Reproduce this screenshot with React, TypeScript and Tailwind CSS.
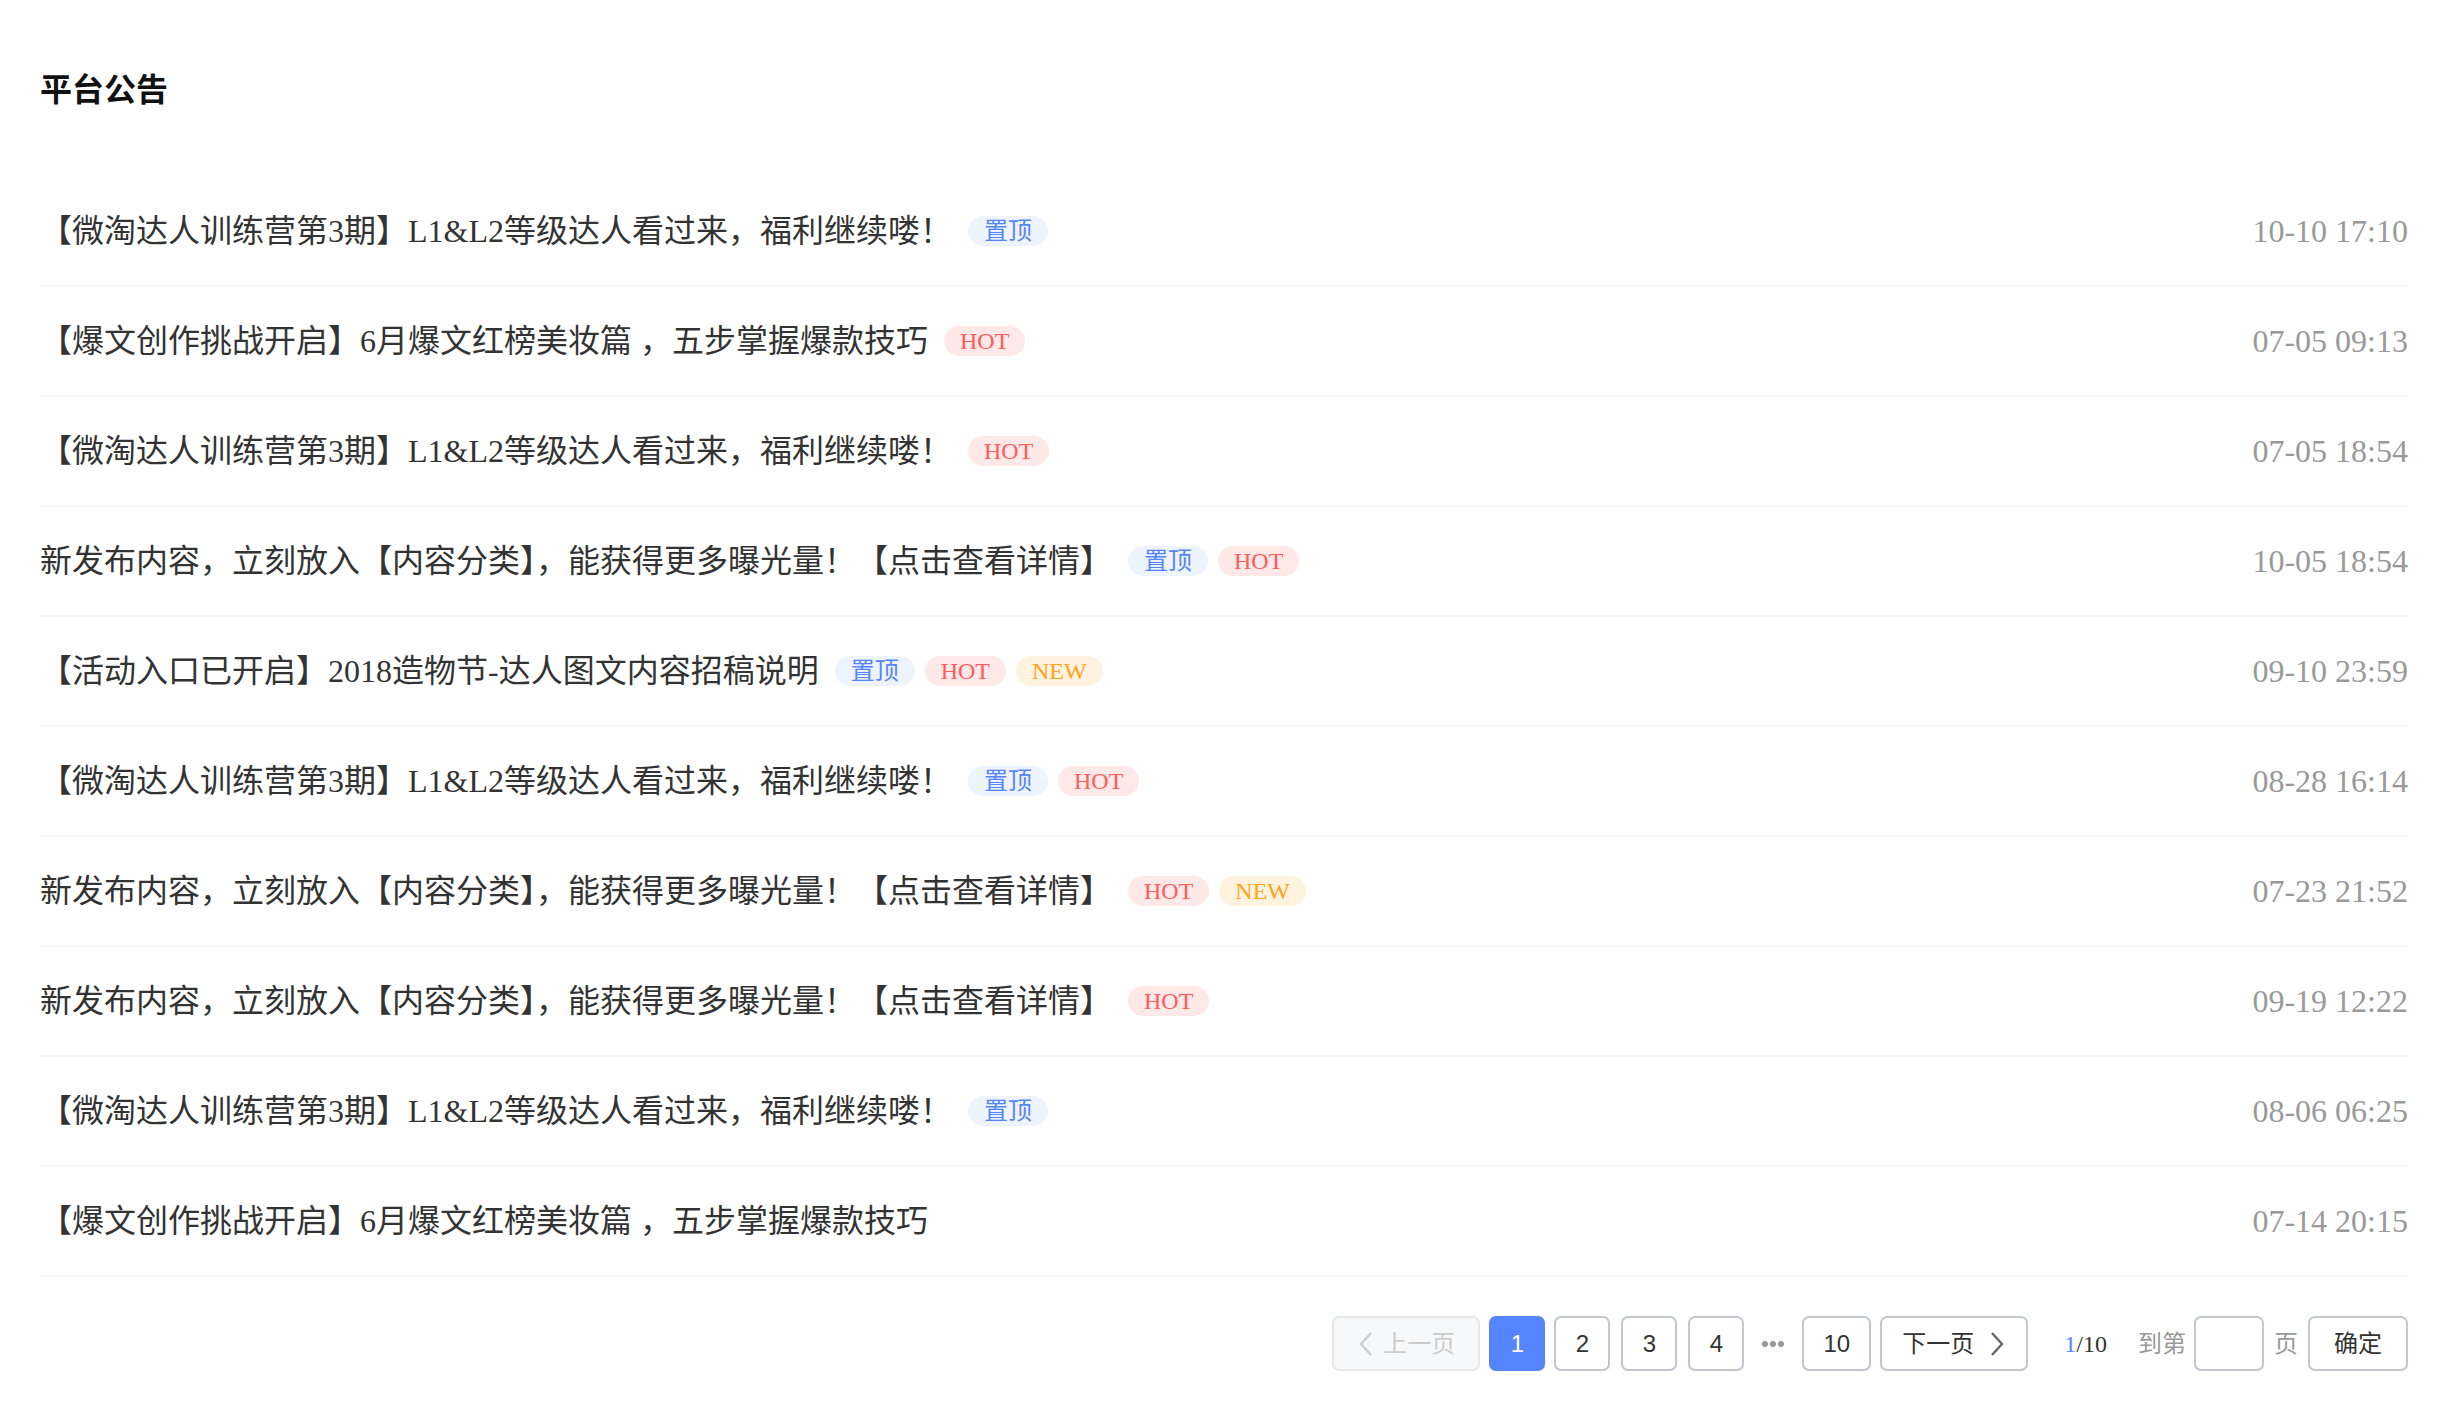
import React from "react";

type Tag = "top" | "hot" | "new";
const rows: { title: string; tags: Tag[]; date: string }[] = [
  { title: "【微淘达人训练营第3期】L1&L2等级达人看过来，福利继续喽！", tags: ["top"], date: "10-10 17:10" },
  { title: "【爆文创作挑战开启】6月爆文红榜美妆篇 ，五步掌握爆款技巧", tags: ["hot"], date: "07-05 09:13" },
  { title: "【微淘达人训练营第3期】L1&L2等级达人看过来，福利继续喽！", tags: ["hot"], date: "07-05 18:54" },
  { title: "新发布内容，立刻放入【内容分类】，能获得更多曝光量！【点击查看详情】", tags: ["top", "hot"], date: "10-05 18:54" },
  { title: "【活动入口已开启】2018造物节-达人图文内容招稿说明", tags: ["top", "hot", "new"], date: "09-10 23:59" },
  { title: "【微淘达人训练营第3期】L1&L2等级达人看过来，福利继续喽！", tags: ["top", "hot"], date: "08-28 16:14" },
  { title: "新发布内容，立刻放入【内容分类】，能获得更多曝光量！【点击查看详情】", tags: ["hot", "new"], date: "07-23 21:52" },
  { title: "新发布内容，立刻放入【内容分类】，能获得更多曝光量！【点击查看详情】", tags: ["hot"], date: "09-19 12:22" },
  { title: "【微淘达人训练营第3期】L1&L2等级达人看过来，福利继续喽！", tags: ["top"], date: "08-06 06:25" },
  { title: "【爆文创作挑战开启】6月爆文红榜美妆篇 ，五步掌握爆款技巧", tags: [], date: "07-14 20:15" },
];

function TagPill({ t }: { t: Tag }) {
  if (t === "top")
    return (
      <span className="ml-[10px] inline-flex h-[30px] items-center rounded-full bg-[#edf4ff] px-[16px] text-[24px] leading-none text-[#5584ff]">
        置顶
      </span>
    );
  if (t === "hot")
    return (
      <span className="ml-[10px] inline-flex h-[30px] items-center rounded-full bg-[#ffe8e8] px-[16px] text-[24px] leading-none text-[#ff5b5b]">
        HOT
      </span>
    );
  return (
    <span className="ml-[10px] inline-flex h-[30px] items-center rounded-full bg-[#fff3e0] px-[16px] text-[24px] leading-none text-[#ffa31a]">
      NEW
    </span>
  );
}

const serif = "[font-family:'Liberation_Serif','Noto_Sans_CJK_SC',serif]";

export default function App() {
  return (
    <div className="min-h-[1412px] w-full bg-white px-[40px] [font-family:'Liberation_Serif','Noto_Sans_CJK_SC',serif]">
      <div className="flex h-[177px] items-center">
        <h1 className="pt-[2px] text-[32px] font-bold leading-none text-[#111]">平台公告</h1>
      </div>
      <div>
        {rows.map((r, i) => (
          <div key={i} className="flex h-[110px] items-center justify-between border-b-2 border-[#f6f6f6]">
            <div className="flex items-center">
              <span className="text-[32px] leading-none text-[#333]">{r.title}</span>
              {r.tags.length > 0 && (
                <span className="ml-[6px] flex items-center">
                  {r.tags.map((t, j) => (
                    <TagPill key={j} t={t} />
                  ))}
                </span>
              )}
            </div>
            <span className="text-[32px] leading-none text-[#999]">{r.date}</span>
          </div>
        ))}
      </div>
      <div className="mt-[39px] flex items-center justify-end [font-family:'Liberation_Sans','Noto_Sans_CJK_SC',sans-serif]">
        <button className="flex h-[55px] w-[148px] items-center justify-center gap-[8px] rounded-[7px] border-2 border-[#e6e7eb] bg-[#f7f8fa] text-[24px] text-[#cccccc]">
          <svg width="18" height="26" viewBox="0 0 18 26" fill="none" stroke="#cccccc" strokeWidth="2.4">
            <path d="M14 2 L4 13 L14 24" />
          </svg>
          <span>上一页</span>
        </button>
        <button className="ml-[9px] flex h-[55px] w-[56px] items-center justify-center rounded-[7px] bg-[#5584ff] text-[24px] text-white">1</button>
        <button className="ml-[9px] flex h-[55px] w-[56px] items-center justify-center rounded-[7px] border-2 border-[#c4c6cf] bg-white text-[24px] text-[#333]">2</button>
        <button className="ml-[11px] flex h-[55px] w-[56px] items-center justify-center rounded-[7px] border-2 border-[#c4c6cf] bg-white text-[24px] text-[#333]">3</button>
        <button className="ml-[11px] flex h-[55px] w-[56px] items-center justify-center rounded-[7px] border-2 border-[#c4c6cf] bg-white text-[24px] text-[#333]">4</button>
        <span className="flex h-[55px] w-[58px] items-center justify-center">
          <svg width="24" height="8" viewBox="0 0 24 8" fill="#999">
            <circle cx="4" cy="4" r="3" />
            <circle cx="12" cy="4" r="3" />
            <circle cx="20" cy="4" r="3" />
          </svg>
        </span>
        <button className="flex h-[55px] w-[69px] items-center justify-center rounded-[7px] border-2 border-[#c4c6cf] bg-white text-[24px] text-[#333]">10</button>
        <button className="ml-[9px] flex h-[55px] w-[148px] items-center justify-center gap-[14px] rounded-[7px] border-2 border-[#c4c6cf] bg-white text-[24px] text-[#333]">
          <span>下一页</span>
          <svg width="18" height="26" viewBox="0 0 18 26" fill="none" stroke="#666" strokeWidth="2.4">
            <path d="M4 2 L14 13 L4 24" />
          </svg>
        </button>
        <span className={`ml-[36px] text-[24px] ${serif}`}>
          <span className="text-[#5584ff]">1</span>
          <span className="text-[#333]">/10</span>
        </span>
        <span className={`ml-[31px] text-[24px] text-[#999] ${serif}`}>到第</span>
        <input className="ml-[8px] h-[55px] w-[70px] rounded-[7px] border-2 border-[#c4c6cf] bg-white outline-none" />
        <span className={`ml-[10px] text-[24px] text-[#999] ${serif}`}>页</span>
        <button className="ml-[10px] flex h-[55px] w-[100px] items-center justify-center rounded-[7px] border-2 border-[#c4c6cf] bg-white text-[24px] text-[#333]">确定</button>
      </div>
    </div>
  );
}
